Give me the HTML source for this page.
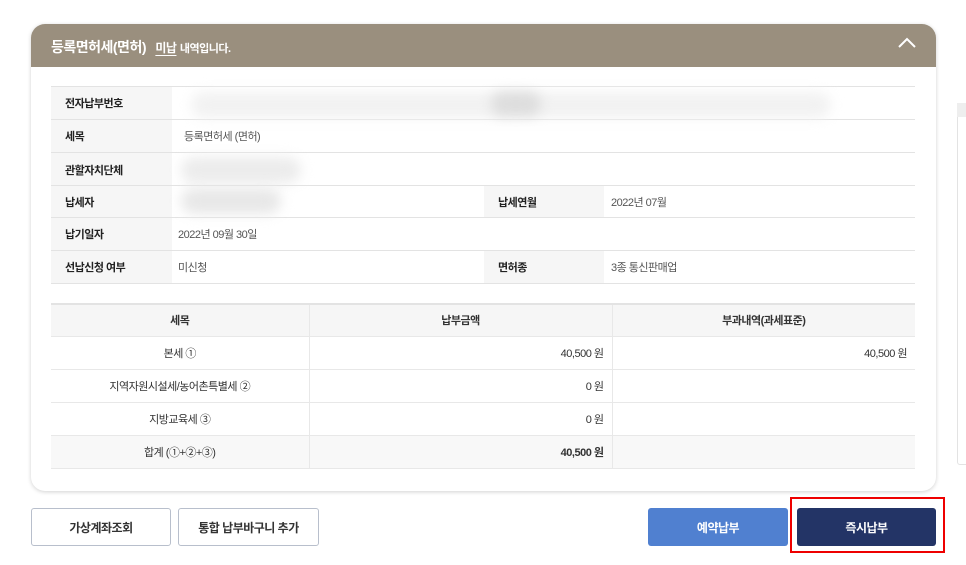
<!DOCTYPE html>
<html><head><meta charset="utf-8"><style>
*{margin:0;padding:0;box-sizing:border-box}
body{width:966px;height:565px;background:#fff;font-family:"Liberation Sans","Noto Sans CJK KR",sans-serif;position:relative;overflow:hidden;color:#333;letter-spacing:-0.5px}
.card{position:absolute;left:31px;top:24px;width:905px;height:467px;border-radius:14px;background:#fff;box-shadow:0 1px 4px rgba(0,0,0,0.18);overflow:hidden}
.hd{height:43px;background:#9a8f7e;color:#fff;font-size:14px;font-weight:bold;padding:13px 0 0 20px}
.hd u{font-size:12px;margin-left:6px;text-underline-offset:3px}
.hd small{font-size:11px}
.chev{position:absolute;right:20px;top:13px}
.abs{position:absolute}
.row{position:absolute;left:20px;width:864px;border-bottom:1px solid #e3e3e3;font-size:11px}
.lab{position:absolute;top:0;height:100%;background:#f6f6f6;font-weight:bold;color:#222;padding-left:14px;display:flex;align-items:center;width:121px}
.val{position:absolute;top:0;height:100%;display:flex;align-items:center;color:#555}
.blur{position:absolute;border-radius:20px;filter:blur(6px);background:#e6e6e6}
table{position:absolute;left:20px;top:279px;width:864px;border-collapse:collapse;font-size:11px}
td,th{height:33px;border-bottom:1px solid #e8e8e8;border-right:1px solid #e8e8e8;color:#333}
th{background:#f6f6f6;font-weight:bold;border-top:2px solid #e3e3e3;height:32px}
tr td:last-child,tr th:last-child{border-right:none}
.r{text-align:right;padding-right:8px}
.c{text-align:center}
.btn{position:absolute;top:508px;height:38px;font-size:12px;font-weight:bold;display:flex;align-items:center;justify-content:center;border-radius:3px}
.w{border:1px solid #b8bfcc;color:#333;background:#fff}
</style></head><body>
<div class="card">
<div class="hd">등록면허세(면허) <u>미납</u> <small>내역입니다.</small></div>
<svg class="chev" width="18" height="12" viewBox="0 0 18 12"><path d="M1 10 L9 2 L17 10" stroke="#fff" stroke-width="2" fill="none"/></svg>
<div class="abs" style="left:20px;top:62px;width:864px;height:1px;background:#e3e3e3"></div>
<div class="row" style="top:63px;height:33px"><div class="lab">전자납부번호</div></div>
<div class="blur" style="left:160px;top:68px;width:640px;height:26px;background:#f2f2f2"></div>
<div class="blur" style="left:460px;top:68px;width:50px;height:24px;background:#ddd"></div>
<div class="row" style="top:96px;height:33px"><div class="lab">세목</div><div class="val" style="left:133px">등록면허세 (면허)</div></div>
<div class="row" style="top:129px;height:33px;border-bottom:none"><div class="lab">관할자치단체</div></div>
<div class="blur" style="left:150px;top:133px;width:120px;height:26px;background:#ececec"></div>
<div class="abs" style="left:20px;top:161px;width:864px;height:1px;background:#e3e3e3"></div>
<div class="row" style="top:162px;height:32px"><div class="lab">납세자</div><div class="lab" style="left:433px;width:120px">납세연월</div><div class="val" style="left:560px">2022년 07월</div></div>
<div class="blur" style="left:150px;top:164px;width:100px;height:26px;background:#e8e8e8"></div>
<div class="row" style="top:194px;height:33px"><div class="lab">납기일자</div><div class="val" style="left:127px">2022년 09월 30일</div></div>
<div class="row" style="top:227px;height:33px"><div class="lab">선납신청 여부</div><div class="val" style="left:127px">미신청</div><div class="lab" style="left:433px;width:120px">면허종</div><div class="val" style="left:560px">3종 통신판매업</div></div>
<table>
<tr><th style="width:258px">세목</th><th style="width:303px">납부금액</th><th>부과내역(과세표준)</th></tr>
<tr><td class="c">본세 ①</td><td class="r">40,500 원</td><td class="r">40,500 원</td></tr>
<tr><td class="c">지역자원시설세/농어촌특별세 ②</td><td class="r">0 원</td><td></td></tr>
<tr><td class="c">지방교육세 ③</td><td class="r">0 원</td><td></td></tr>
<tr style="background:#f8f8f8"><td class="c">합계 (①+②+③)</td><td class="r" style="font-weight:bold">40,500 원</td><td></td></tr>
</table>
</div>
<div class="abs" style="left:957px;top:103px;width:20px;height:362px;border:1px solid #e3e3e3;border-radius:3px;background:#fff"></div>
<div class="abs" style="left:957px;top:103px;width:20px;height:14px;background:#eee"></div>
<div class="btn w" style="left:31px;width:140px">가상계좌조회</div>
<div class="btn w" style="left:178px;width:141px">통합 납부바구니 추가</div>
<div class="btn" style="left:648px;width:140px;background:#5080d0;color:#fff">예약납부</div>
<div class="abs" style="left:790px;top:497px;width:155px;height:56px;border:2.5px solid #e00"></div>
<div class="btn" style="left:797px;width:139px;background:#233466;color:#fff">즉시납부</div>
</body></html>
